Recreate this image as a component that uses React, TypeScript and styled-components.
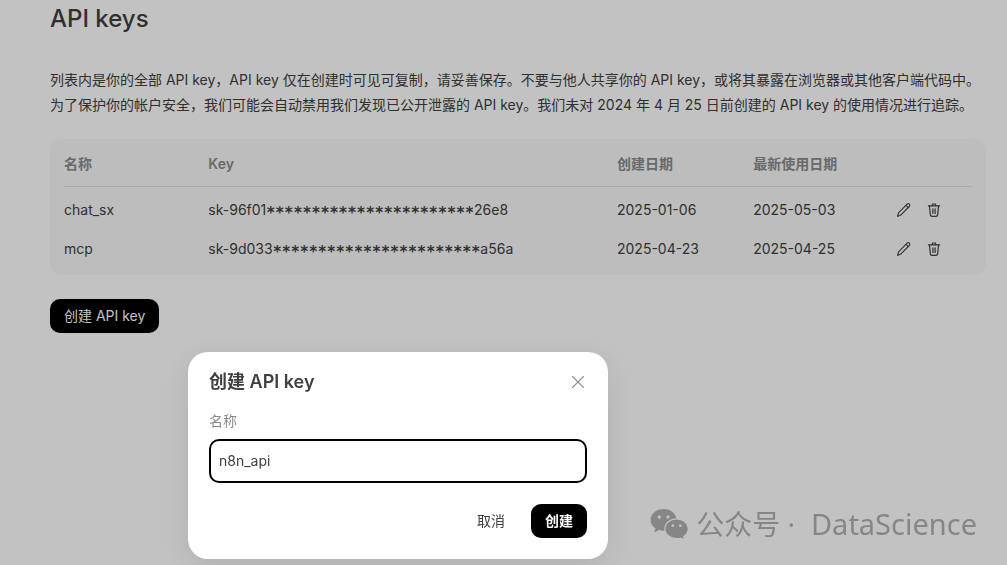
import React from 'react';
import styled, { createGlobalStyle } from 'styled-components';

const GlobalStyle = createGlobalStyle`
  * { box-sizing: border-box; }
  body {
    margin: 0;
    background: #fff;
    color: #404040;
    font-family: Inter, "Noto Sans CJK SC", sans-serif;
    font-size: 14px;
    line-height: 20px;
  }
  button, input { font: inherit; color: inherit; }
`;

const Page = styled.main`
  padding: 2px 21px 24px 50px;
`;

const PageTitle = styled.h1`
  margin: 0 0 31px;
  font-size: 24px;
  line-height: 34px;
  font-weight: 500;
`;

const Intro = styled.p`
  margin: 0 0 22px;
  line-height: 25px;
`;

const Panel = styled.section`
  margin-bottom: 24px;
  padding: 3px 14px 6px;
  border-radius: 12px;
  background: #f9f9f9;
`;

const KeyTable = styled.table`
  width: 100%;
  table-layout: fixed;
  border-collapse: collapse;
  tbody::before {
    content: '';
    display: block;
    height: 4px;
  }
`;

const Col = styled.col<{ $share: number }>`
  width: ${(p) => p.$share}%;
`;

const HeadCell = styled.th`
  height: 44px;
  padding: 0;
  border-bottom: 1px solid #e1e1e1;
  color: #8b8b8b;
  font-weight: 600;
  text-align: left;
`;

const Cell = styled.td`
  height: 39px;
  padding: 0;
`;

const Mask = styled.span`
  font-family: "DejaVu Sans Mono", monospace;
  font-size: 15px;
  line-height: 1;
  font-weight: 700;
  vertical-align: -3px;
`;

const Actions = styled.div`
  display: flex;
  gap: 14px;
`;

const IconButton = styled.button<{ $size: number }>`
  display: flex;
  align-items: center;
  justify-content: center;
  width: ${(p) => p.$size}px;
  height: ${(p) => p.$size}px;
  padding: 0;
  border: 0;
  background: none;
`;

const Button = styled.button<{ $primary?: boolean; $strong?: boolean }>`
  height: 34px;
  padding: 0 14px;
  border: 0;
  border-radius: 10px;
  background: ${(p) => (p.$primary ? '#000' : 'transparent')};
  color: ${(p) => (p.$primary ? '#fff' : '#404040')};
  font-weight: ${(p) => (p.$strong ? 600 : 400)};
`;

const Backdrop = styled.div`
  position: fixed;
  inset: 0;
  display: flex;
  align-items: flex-start;
  padding: 352px 24px 0 188px;
  background: rgba(0, 0, 0, 0.24);
`;

const Dialog = styled.form`
  width: 100%;
  max-width: 420px;
  padding: 16px 21px 21px;
  border-radius: 20px;
  background: #fff;
  box-shadow: 0 8px 32px rgba(0, 0, 0, 0.1);
`;

const DialogHeader = styled.header`
  display: flex;
  align-items: center;
  justify-content: space-between;
  margin-bottom: 15px;
`;

const DialogTitle = styled.h2`
  margin: 0;
  font-size: 18px;
  line-height: 28px;
  font-weight: 600;
`;

const Label = styled.label`
  display: block;
  margin-bottom: 8px;
  color: #8b8b8b;
`;

const TextInput = styled.input`
  display: block;
  width: 100%;
  height: 44px;
  margin-bottom: 21px;
  padding: 0 8px 2px;
  border: 2px solid #000;
  border-radius: 10px;
  outline: none;
  background: #fff;
`;

const DialogFooter = styled.footer`
  display: flex;
  justify-content: flex-end;
  gap: 12px;
`;

const Watermark = styled.div`
  position: fixed;
  right: 30px;
  bottom: 21px;
  display: flex;
  align-items: center;
  gap: 8px;
  color: #868686;
  font-family: "Noto Sans", "Noto Sans CJK SC", sans-serif;
  font-size: 28px;
  line-height: 40px;
`;

const Account = styled.span`
  margin-left: 8px;
  font-size: 29px;
`;

const PencilIcon = () => (
  <svg width="16" height="16" viewBox="0 0 16 16" fill="none" stroke="currentColor" strokeWidth="1.1" strokeLinejoin="round" aria-hidden="true">
    <path d="M1.6 14.4l.9-3.6 8.6-8.6c.7-.7 1.7-.7 2.3-.1s.6 1.7-.1 2.4l-8.6 8.6z" />
    <path d="M10 3.4l2.5 2.5" />
  </svg>
);

const TrashIcon = () => (
  <svg width="16" height="16" viewBox="0 0 16 16" fill="none" stroke="currentColor" strokeWidth="1.2" strokeLinecap="round" strokeLinejoin="round" aria-hidden="true">
    <path d="M2.4 3.9h11.2" />
    <path d="M6.2 3.7l.4-1.7h2.8l.4 1.7" />
    <path d="M3.5 4.2l.8 8.4c.1 1 .7 1.7 1.7 1.7h4c1 0 1.6-.7 1.7-1.7l.8-8.4" />
    <path d="M6.9 6.8v4.7M9.1 6.8v4.7" />
  </svg>
);

const CloseIcon = () => (
  <svg width="12" height="12" viewBox="0 0 12 12" fill="none" stroke="#8b8b8b" strokeWidth="1.3" strokeLinecap="round" aria-hidden="true">
    <path d="M.6.6l10.8 10.8M11.4.6L.6 11.4" />
  </svg>
);

const WeChatIcon = () => (
  <svg width="38" height="32" viewBox="0 0 38 32" aria-hidden="true">
    <g fill="currentColor">
      <path d="M13.5 1C6.3 1 .6 5.9.6 12c0 3.5 1.9 6.5 4.9 8.5l-1.3 4 4.7-2.4c1.5.5 3 .7 4.6.7 7.2 0 13-4.8 13-10.9S20.7 1 13.5 1z" />
      <path stroke="#c2c2c2" strokeWidth="1.2" d="M26.6 10.9c-6.5 0-11.7 4.4-11.7 9.9s5.2 9.9 11.7 9.9c1.5 0 2.9-.2 4.1-.6l4 2-1.1-3.5c2.8-1.8 4.6-4.7 4.6-7.800 0-5.500-5.200-9.900-11.600-9.900z" />
    </g>
    <g fill="#c2c2c2">
      <circle cx="9.3" cy="9" r="1.7" />
      <circle cx="18" cy="9" r="1.7" />
      <circle cx="22.8" cy="17.7" r="1.4" />
      <circle cx="30.3" cy="17.7" r="1.4" />
    </g>
  </svg>
);

const MASK = '*'.repeat(23);

const keys = [
  { name: 'chat_sx', start: 'sk-96f01', end: '26e8', created: '2025-01-06', used: '2025-05-03' },
  { name: 'mcp', start: 'sk-9d033', end: 'a56a', created: '2025-04-23', used: '2025-04-25' },
];

export default function App() {
  return (
    <>
      <GlobalStyle />
      <Page>
        <PageTitle>API keys</PageTitle>
        <Intro>
          列表内是你的全部 API key，API key 仅在创建时可见可复制，请妥善保存。不要与他人共享你的 API key，或将其暴露在浏览器或其他客户端代码中。
          <br />
          为了保护你的帐户安全，我们可能会自动禁用我们发现已公开泄露的 API key。我们未对 2024 年 4 月 25 日前创建的 API key 的使用情况进行追踪。
        </Intro>
        <Panel>
          <KeyTable>
            <colgroup>
              <Col $share={15.9} />
              <Col $share={45} />
              <Col $share={15} />
              <Col $share={15.7} />
              <Col $share={8.4} />
            </colgroup>
            <thead>
              <tr>
                <HeadCell>名称</HeadCell>
                <HeadCell>Key</HeadCell>
                <HeadCell>创建日期</HeadCell>
                <HeadCell>最新使用日期</HeadCell>
                <HeadCell aria-label="操作" />
              </tr>
            </thead>
            <tbody>
              {keys.map((k) => (
                <tr key={k.name}>
                  <Cell>{k.name}</Cell>
                  <Cell>
                    {k.start}
                    <Mask>{MASK}</Mask>
                    {k.end}
                  </Cell>
                  <Cell>{k.created}</Cell>
                  <Cell>{k.used}</Cell>
                  <Cell>
                    <Actions>
                      <IconButton type="button" $size={16} aria-label="编辑">
                        <PencilIcon />
                      </IconButton>
                      <IconButton type="button" $size={16} aria-label="删除">
                        <TrashIcon />
                      </IconButton>
                    </Actions>
                  </Cell>
                </tr>
              ))}
            </tbody>
          </KeyTable>
        </Panel>
        <Button type="button" $primary>创建 API key</Button>
      </Page>

      <Backdrop>
        <Dialog role="dialog" aria-modal="true" aria-labelledby="dialog-title" onSubmit={(e) => e.preventDefault()}>
          <DialogHeader>
            <DialogTitle id="dialog-title">创建 API key</DialogTitle>
            <IconButton type="button" $size={18} aria-label="关闭">
              <CloseIcon />
            </IconButton>
          </DialogHeader>
          <Label htmlFor="key-name">名称</Label>
          <TextInput id="key-name" type="text" defaultValue="n8n_api" />
          <DialogFooter>
            <Button type="button">取消</Button>
            <Button type="submit" $primary $strong>创建</Button>
          </DialogFooter>
        </Dialog>
      </Backdrop>

      <Watermark>
        <WeChatIcon />
        <span>公众号 ·</span>
        <Account>DataScience</Account>
      </Watermark>
    </>
  );
}
